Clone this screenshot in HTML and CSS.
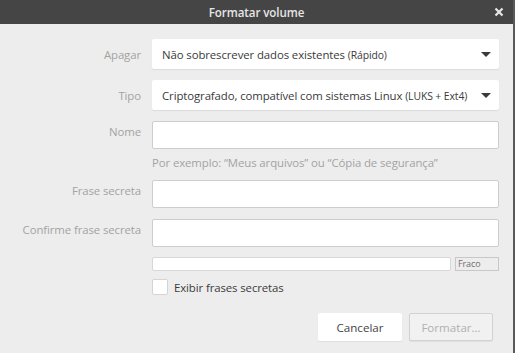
FILE: index.html
```html
<!DOCTYPE html>
<html lang="pt">
<head>
  <meta charset="UTF-8" />
  <title>Formatar volume</title>
  <link rel="stylesheet" href="styles.css">
</head>
<body>
  <div class="dialog">
    <div class="titlebar">
      <span class="title">Formatar volume</span>
      <span class="close">
        <svg width="10" height="10" viewBox="0 0 10 10"><path d="M1.5 1.5 L8.5 8.5 M8.5 1.5 L1.5 8.5" stroke="#e8e8e8" stroke-width="2.2"/></svg>
      </span>
    </div>

    <div class="content">
      <div class="row row-combo">
        <label class="label">Apagar</label>
        <div class="combo">
          <span>Não sobrescrever dados existentes <small>(Rápido)</small></span>
          <span class="arrow"></span>
        </div>
      </div>

      <div class="row row-combo">
        <label class="label">Tipo</label>
        <div class="combo">
          <span>Criptografado, compatível com sistemas Linux <small>(LUKS + Ext4)</small></span>
          <span class="arrow"></span>
        </div>
      </div>

      <div class="row row-entry">
        <label class="label">Nome</label>
        <div class="entry"></div>
      </div>
      <div class="hint">Por exemplo: “Meus arquivos” ou “Cópia de segurança”</div>

      <div class="row row-entry">
        <label class="label">Frase secreta</label>
        <div class="entry"></div>
      </div>

      <div class="row row-entry">
        <label class="label">Confirme frase secreta</label>
        <div class="entry"></div>
      </div>

      <div class="strength">
        <div class="bar"></div>
        <div class="level">Fraco</div>
      </div>

      <div class="check">
        <span class="box"></span>
        <span>Exibir frases secretas</span>
      </div>

      <div class="buttons">
        <button class="btn">Cancelar</button>
        <button class="btn disabled">Formatar…</button>
      </div>
    </div>
  </div>
</body>
</html>
```
FILE: styles.css
```css
* {
  box-sizing: border-box;
}

body {
  margin: 0;
  font-family: 'Open Sans', 'Noto Sans', sans-serif;
  font-size: 11.4px;
  letter-spacing: -0.1px;
  color: #3c3c3c;
  background-color: #ededed;
}

.dialog {
  width: 515px;
  height: 353px;
  border-right: 2px solid #5a5a5a;
  background-color: #ededed;
  overflow: hidden;
}

.titlebar {
  height: 24px;
  background-color: #454545;
  display: flex;
  align-items: center;
  justify-content: center;
  position: relative;
}

.title {
  color: #e6e6e6;
  font-weight: 600;
  font-size: 11.6px;
}

.close {
  position: absolute;
  right: 9px;
  top: 7px;
  display: flex;
}

.content {
  padding: 15px 14px 0 0;
  display: flex;
  flex-direction: column;
}

.row {
  display: flex;
  align-items: flex-start;
}

.label {
  width: 152px;
  padding-right: 11px;
  text-align: right;
  color: #a3a3a3;
  flex-shrink: 0;
}

.row-combo {
  height: 30px;
  align-items: center;
  margin-bottom: 11px;
}

.combo {
  flex: 1;
  height: 30px;
  background-color: #fff;
  border-radius: 2px;
  box-shadow: 0 1px 1px rgba(0, 0, 0, 0.08);
  display: flex;
  align-items: center;
  justify-content: space-between;
  padding: 0 8px 0 10px;
  color: #3a3a3a;
  white-space: nowrap;
}

.combo small {
  font-size: 10.4px;
}

.arrow {
  width: 0;
  height: 0;
  border-left: 5px solid transparent;
  border-right: 5px solid transparent;
  border-top: 5px solid #3a3a3a;
}

.row-entry {
  margin-bottom: 11px;
}

.row-entry .label {
  padding-top: 3px;
}

.entry {
  flex: 1;
  height: 28px;
  background-color: #fff;
  border: 1px solid #cdcdcd;
  border-radius: 2px;
}

.hint {
  margin: -5px 0 10px 152px;
  color: #a3a3a3;
}

.strength {
  display: flex;
  margin-left: 152px;
  gap: 4px;
  height: 14px;
  margin-top: -1px;
}

.bar {
  flex: 1;
  background-color: #fff;
  border: 1px solid #d8d8d8;
  border-radius: 2px;
}

.level {
  width: 44px;
  border: 1px solid #c8c8c8;
  background-color: #ededed;
  font-size: 9px;
  line-height: 12px;
  padding-left: 2px;
  color: #6e6e6e;
}

.check {
  display: flex;
  align-items: center;
  margin: 8px 0 0 152px;
  gap: 6px;
  color: #3c3c3c;
}

.box {
  width: 16px;
  height: 16px;
  background-color: #fff;
  border: 1px solid #d4d4d4;
  border-radius: 2px;
}

.buttons {
  display: flex;
  justify-content: flex-end;
  gap: 7px;
  margin-top: 18px;
  padding-right: 6px;
}

.btn {
  width: 84px;
  height: 28px;
  font-family: inherit;
  font-size: 11.6px;
  color: #444;
  background-color: #fff;
  border: none;
  border-radius: 2px;
  box-shadow: 0 1px 1px rgba(0, 0, 0, 0.06);
}

.btn.disabled {
  background-color: #f1f1f1;
  border: 1px solid #d2d2d2;
  color: #b0b0b0;
}
```
